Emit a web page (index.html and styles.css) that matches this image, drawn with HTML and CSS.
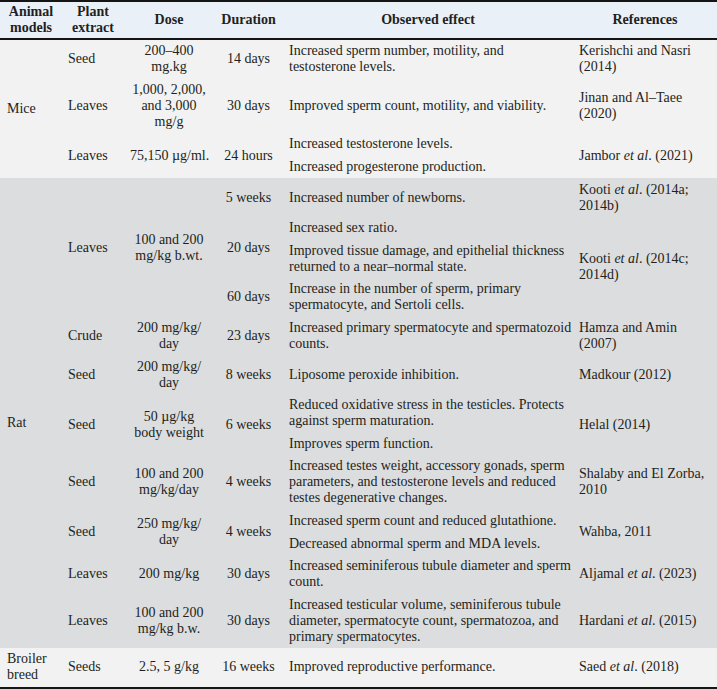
FILE: index.html
```html
<!DOCTYPE html>
<html lang="en">
<head>
<meta charset="utf-8">
<title>Table</title>
<link rel="stylesheet" href="styles.css">
</head>
<body>
<table class="data">
  <colgroup>
    <col class="c1"><col class="c2"><col class="c3"><col class="c4"><col class="c5"><col class="c6">
  </colgroup>
  <thead>
    <tr>
      <th>Animal<br>models</th>
      <th>Plant<br>extract</th>
      <th>Dose</th>
      <th>Duration</th>
      <th>Observed effect</th>
      <th>References</th>
    </tr>
  </thead>
  <tbody class="light">
    <tr>
      <td class="animal" rowspan="4">Mice</td>
      <td class="plant">Seed</td>
      <td class="mid">200–400<br>mg.kg</td>
      <td class="mid">14 days</td>
      <td class="effect">Increased sperm number, motility, and<br>testosterone levels.</td>
      <td class="ref">Kerishchi and Nasri<br>(2014)</td>
    </tr>
    <tr>
      <td class="plant">Leaves</td>
      <td class="mid">1,000, 2,000,<br>and 3,000<br>mg/g</td>
      <td class="mid">30 days</td>
      <td class="effect">Improved sperm count, motility, and viability.</td>
      <td class="ref">Jinan and Al–Taee<br>(2020)</td>
    </tr>
    <tr>
      <td class="plant" rowspan="2">Leaves</td>
      <td class="mid" rowspan="2">75,150 µg/ml.</td>
      <td class="mid" rowspan="2">24 hours</td>
      <td class="effect">Increased testosterone levels.</td>
      <td class="ref" rowspan="2">Jambor <i>et al</i>. (2021)</td>
    </tr>
    <tr>
      <td class="effect">Increased progesterone production.</td>
    </tr>
  </tbody>
  <tbody class="dark">
    <tr>
      <td class="animal rat" rowspan="13">Rat</td>
      <td class="plant" rowspan="4">Leaves</td>
      <td class="mid" rowspan="4">100 and 200<br>mg/kg b.wt.</td>
      <td class="mid">5 weeks</td>
      <td class="effect">Increased number of newborns.</td>
      <td class="ref">Kooti <i>et al</i>. (2014a;<br>2014b)</td>
    </tr>
    <tr>
      <td class="mid" rowspan="2">20 days</td>
      <td class="effect">Increased sex ratio.</td>
      <td class="ref" rowspan="3">Kooti <i>et al</i>. (2014c;<br>2014d)</td>
    </tr>
    <tr>
      <td class="effect">Improved tissue damage, and epithelial thickness<br>returned to a near–normal state.</td>
    </tr>
    <tr>
      <td class="mid">60 days</td>
      <td class="effect">Increase in the number of sperm, primary<br>spermatocyte, and Sertoli cells.</td>
    </tr>
    <tr>
      <td class="plant">Crude</td>
      <td class="mid">200 mg/kg/<br>day</td>
      <td class="mid">23 days</td>
      <td class="effect">Increased primary spermatocyte and spermatozoid<br>counts.</td>
      <td class="ref">Hamza and Amin<br>(2007)</td>
    </tr>
    <tr>
      <td class="plant">Seed</td>
      <td class="mid">200 mg/kg/<br>day</td>
      <td class="mid">8 weeks</td>
      <td class="effect">Liposome peroxide inhibition.</td>
      <td class="ref">Madkour (2012)</td>
    </tr>
    <tr>
      <td class="plant" rowspan="2">Seed</td>
      <td class="mid" rowspan="2">50 µg/kg<br>body weight</td>
      <td class="mid" rowspan="2">6 weeks</td>
      <td class="effect">Reduced oxidative stress in the testicles. Protects<br>against sperm maturation.</td>
      <td class="ref" rowspan="2">Helal (2014)</td>
    </tr>
    <tr>
      <td class="effect">Improves sperm function.</td>
    </tr>
    <tr>
      <td class="plant">Seed</td>
      <td class="mid">100 and 200<br>mg/kg/day</td>
      <td class="mid">4 weeks</td>
      <td class="effect">Increased testes weight, accessory gonads, sperm<br>parameters, and testosterone levels and reduced<br>testes degenerative changes.</td>
      <td class="ref">Shalaby and El Zorba,<br>2010</td>
    </tr>
    <tr>
      <td class="plant" rowspan="2">Seed</td>
      <td class="mid" rowspan="2">250 mg/kg/<br>day</td>
      <td class="mid" rowspan="2">4 weeks</td>
      <td class="effect">Increased sperm count and reduced glutathione.</td>
      <td class="ref" rowspan="2">Wahba, 2011</td>
    </tr>
    <tr>
      <td class="effect">Decreased abnormal sperm and MDA levels.</td>
    </tr>
    <tr>
      <td class="plant">Leaves</td>
      <td class="mid">200 mg/kg</td>
      <td class="mid">30 days</td>
      <td class="effect">Increased seminiferous tubule diameter and sperm<br>count.</td>
      <td class="ref">Aljamal <i>et al</i>. (2023)</td>
    </tr>
    <tr>
      <td class="plant">Leaves</td>
      <td class="mid">100 and 200<br>mg/kg b.w.</td>
      <td class="mid">30 days</td>
      <td class="effect">Increased testicular volume, seminiferous tubule<br>diameter, spermatocyte count, spermatozoa, and<br>primary spermatocytes.</td>
      <td class="ref">Hardani <i>et al</i>. (2015)</td>
    </tr>
  </tbody>
  <tbody class="light last">
    <tr>
      <td class="animal">Broiler<br>breed</td>
      <td class="plant">Seeds</td>
      <td class="mid">2.5, 5 g/kg</td>
      <td class="mid">16 weeks</td>
      <td class="effect">Improved reproductive performance.</td>
      <td class="ref">Saed <i>et al</i>. (2018)</td>
    </tr>
  </tbody>
</table>
</body>
</html>
```
FILE: styles.css
```css
html, body {
  margin: 0;
  padding: 0;
  background: #ffffff;
}

body {
  font-family: "Liberation Serif", serif;
  font-size: 14px;
  line-height: 16px;
  color: #231f20;
}

.data {
  width: 717px;
  table-layout: fixed;
  border-collapse: separate;
  border-spacing: 0;
}

.c1 { width: 62px; }
.c2 { width: 62px; }
.c3 { width: 90px; }
.c4 { width: 69px; }
.c5 { width: 290px; }
.c6 { width: 144px; }

.data th {
  background: #eaf0f8;
  font-weight: bold;
  text-align: center;
  vertical-align: middle;
  padding: 2px 4px;
  border-top: 2px solid #151515;
  border-bottom: 2px solid #151515;
  white-space: nowrap;
}

.data td {
  padding: 3.3px 6px;
  vertical-align: middle;
  white-space: nowrap;
}

.light { background: #f2f2f2; }
.dark { background: #dcdddf; }

.data .last td {
  border-bottom: 2px solid #151515;
}

.data td.animal {
  text-align: left;
  padding-left: 7px;
}

.data td.rat {
  padding-top: 23px;
}

.plant { text-align: left; }
.mid { text-align: center; }
.effect { text-align: left; }
.ref { text-align: left; }
```
